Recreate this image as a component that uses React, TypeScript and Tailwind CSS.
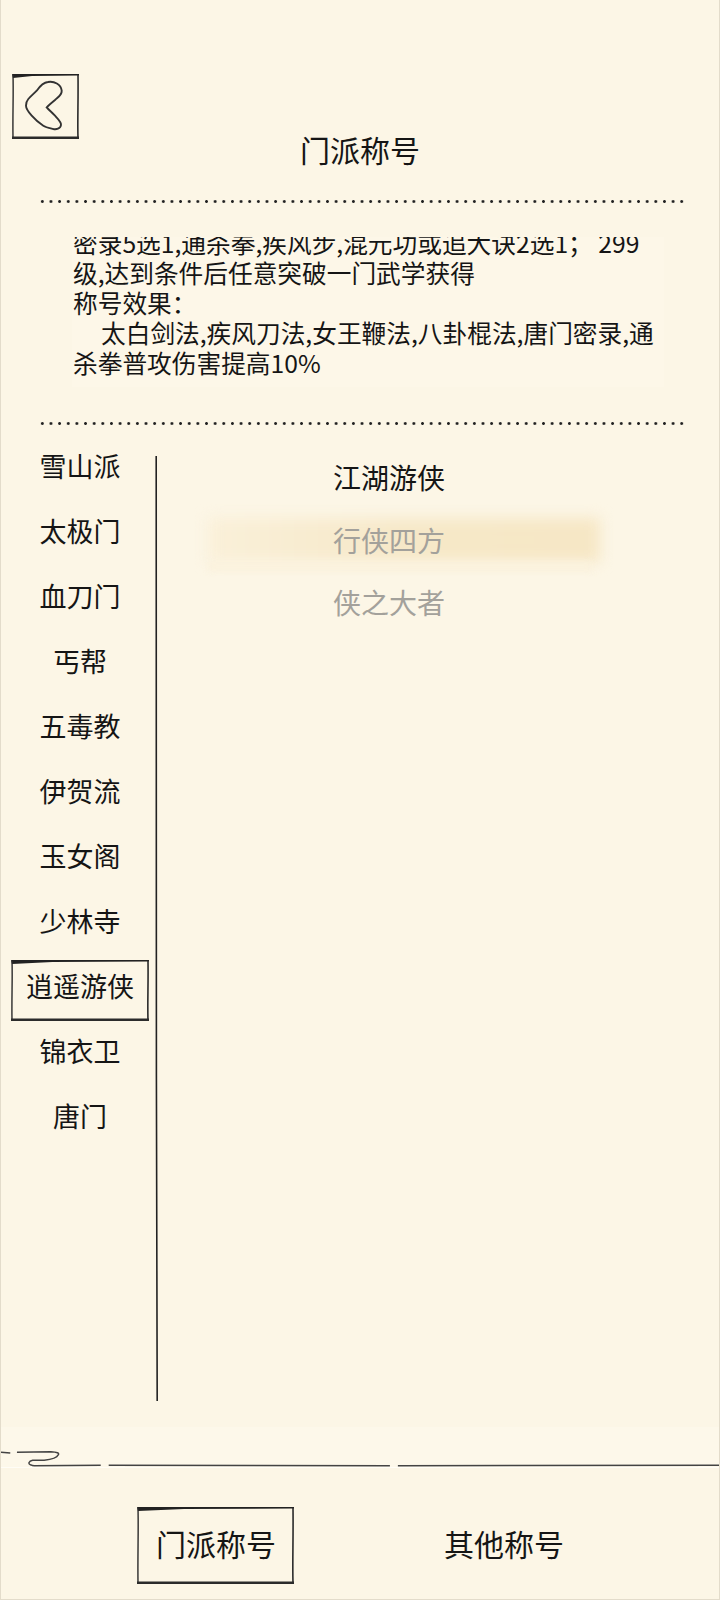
const sects = ['雪山派', '太极门', '血刀门', '丐帮', '五毒教', '伊贺流', '玉女阁', '少林寺', '逍遥游侠', '锦衣卫', '唐门'];

function Dots() {
  return (
    <div className="ml-[37px] h-[3px] w-[646px] bg-[radial-gradient(circle,#222_1.2px,transparent_1.6px)] bg-[length:8.65px_3px]" />
  );
}

function SketchFrame({ w, h }: { w: number; h: number }) {
  return (
    <svg viewBox={`0 0 ${w} ${h}`} className="pointer-events-none absolute inset-0 h-full w-full" fill="none" stroke="#2b2b2b">
      <path d={`M0 0 L${w} 0 L${w} 1.6 L${w * 0.3} 2 L1 4 Z`} fill="#222" stroke="none" />
      <path d={`M1 1 C1.6 ${h * 0.3} 0.6 ${h * 0.6} 1 ${h - 1}`} strokeWidth="1.4" />
      <path d={`M${w - 1} 1 C${w - 0.6} ${h * 0.4} ${w - 1.6} ${h * 0.7} ${w - 1} ${h - 1}`} strokeWidth="1.6" />
      <path d={`M0 ${h - 1.2} L${w} ${h - 1.2}`} strokeWidth="2.4" />
    </svg>
  );
}

export default function App() {
  return (
    <div className="flex h-[1600px] w-[720px] flex-col overflow-hidden border-x border-b border-[#e3dccb] bg-[#fcf6e6] font-['Noto_Sans_CJK_SC','Noto_Sans',sans-serif] text-[#151515]">
      <div className="h-[200px] shrink-0 pt-[74px]">
        <button className="relative ml-[11px] block h-[65px] w-[67px]">
          <SketchFrame w={67} h={65} />
          <svg viewBox="0 0 67 65" className="h-full w-full" fill="none" stroke="#333" strokeWidth="1.9">
            <path d="M24.7 16.7 C28 12 31 8.5 36 8 C42 7 49 10 49.7 16.7 C50 21 46 23 43 26 C40 28.5 37 31 34.7 33.3 C37 36 40 38.5 43 41.7 C46 45 49.5 48 49 51 C48.5 55 44 55.5 41.3 55 C37 54 34 53.5 31.3 51.7 C27 49 23 45.5 19.7 41.7 C16.5 38 14 35 14 31.7 C14 28 15 26.5 16.3 25 C19 22 22 19.5 24.7 16.7 Z" />
          </svg>
        </button>
        <h1 className="-mt-[10px] text-center text-[30px] leading-[40px] font-normal">门派称号</h1>
      </div>
      <Dots />
      <div className="mt-[34px] ml-[71px] h-[150px] w-[592px] overflow-hidden bg-[#fdf7e8] pl-[1px] text-[24.7px] leading-[30px]">
        <div className="-mt-[10px]">
          <div className="whitespace-nowrap">密录5选1,通杀拳,疾风步,混元功或追大诀2选1； 299</div>
          <div className="whitespace-nowrap">级,达到条件后任意突破一门武学获得</div>
          <div>称号效果：</div>
          <div className="whitespace-nowrap pl-[28px]">太白剑法,疾风刀法,女王鞭法,八卦棍法,唐门密录,通</div>
          <div className="whitespace-nowrap">杀拳普攻伤害提高10%</div>
        </div>
      </div>
      <div className="mt-[35px]">
        <Dots />
      </div>
      <div className="mt-[10px] flex h-[992px] shrink-0">
        <div className="-mt-[2px] w-[154px] shrink-0">
          {sects.map((s) => (
            <div key={s} className="flex h-[65px] items-center justify-center pl-[4px] text-[27px] leading-none">
              {s === '逍遥游侠' ? (
                <span className="relative mt-[9px] flex h-[61px] w-[138px] items-center justify-center pb-[9px] whitespace-nowrap">
                  <SketchFrame w={138} h={61} />
                  {s}
                </span>
              ) : (
                s
              )}
            </div>
          ))}
        </div>
        <svg viewBox="0 0 3 945" className="mt-[21px] h-[945px] w-[3px] shrink-0" fill="none" stroke="#222" strokeWidth="1.6">
          <path d="M1.2 0 C1 220 1.8 430 1.4 620 C1.2 780 2 880 2.2 945" />
        </svg>
        <div className="flex-1 pt-[11px] pl-[175px] text-[28px] leading-none">
          <div className="flex h-[62.5px] items-center">江湖游侠</div>
          <div className="relative flex h-[62.5px] items-center text-[#a3a19b]">
            <div className="absolute top-[9px] -left-[125px] h-[44px] w-[392px] bg-linear-to-r from-[#faf0d9] via-[#f6e8c8] to-[#f6e7c5] blur-[7px]" />
            <div className="absolute top-[53px] -left-[125px] h-[9px] w-[384px] bg-[#fbf2dd] blur-[3px]" />
            <span className="relative">行侠四方</span>
          </div>
          <div className="flex h-[62.5px] items-center text-[#a3a19b]">侠之大者</div>
        </div>
      </div>
      <div className="h-[41px] shrink-0 border-b border-[#fffdf6] bg-[#fdf8ea]">
        <svg viewBox="0 0 720 40" className="block h-[40px] w-full" fill="none" stroke="#444" strokeWidth="1.5">
          <path d="M0 25.3 L9.3 26 M16 25.3 L50 24.7 C56 25 59 26 57.3 28 C56 31 50 32.5 43.3 33.3 L31.7 33.3 C28 34 26.5 37 30 38 C31 38.6 32 38.8 33.3 38.8 L100 38.3" />
          <path d="M108 38.3 L390 38.8 M398 38.8 L720 38.4" />
        </svg>
      </div>
      <div className="flex flex-1 items-start pt-[39px] text-[30px] leading-none">
        <button className="relative ml-[136px] flex h-[77px] w-[157px] items-center justify-center pb-[6px] pl-[1px]">
          <SketchFrame w={157} h={77} />
          门派称号
        </button>
        <button className="ml-[150px] flex h-[77px] items-center pb-[6px]">其他称号</button>
      </div>
    </div>
  );
}
